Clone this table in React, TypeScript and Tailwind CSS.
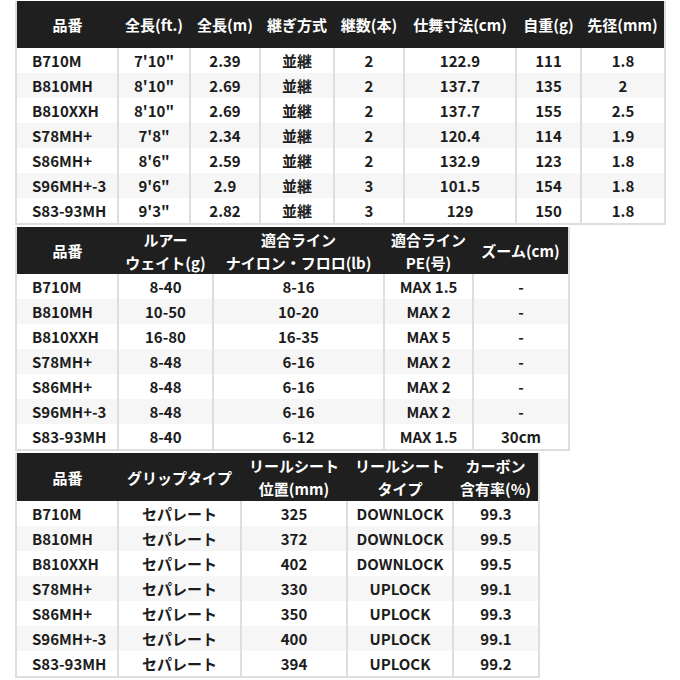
const font = { fontFamily: '"Noto Sans CJK JP", "Noto Sans", sans-serif' };

type Col = { label: string[]; w: number };

const rods = ["B710M", "B810MH", "B810XXH", "S78MH+", "S86MH+", "S96MH+-3", "S83-93MH"];

const t1Cols: Col[] = [
  { label: ["品番"], w: 102 },
  { label: ["全長(ft.)"], w: 72 },
  { label: ["全長(m)"], w: 70 },
  { label: ["継ぎ方式"], w: 74 },
  { label: ["継数(本)"], w: 70 },
  { label: ["仕舞寸法(cm)"], w: 112 },
  { label: ["自重(g)"], w: 65 },
  { label: ["先径(mm)"], w: 84 },
];
const t1Rows = [
  ["7'10\"", "2.39", "並継", "2", "122.9", "111", "1.8"],
  ["8'10\"", "2.69", "並継", "2", "137.7", "135", "2"],
  ["8'10\"", "2.69", "並継", "2", "137.7", "155", "2.5"],
  ["7'8\"", "2.34", "並継", "2", "120.4", "114", "1.9"],
  ["8'6\"", "2.59", "並継", "2", "132.9", "123", "1.8"],
  ["9'6\"", "2.9", "並継", "3", "101.5", "154", "1.8"],
  ["9'3\"", "2.82", "並継", "3", "129", "150", "1.8"],
];

const t2Cols: Col[] = [
  { label: ["品番"], w: 102 },
  { label: ["ルアー", "ウェイト(g)"], w: 95 },
  { label: ["適合ライン", "ナイロン・フロロ(lb)"], w: 171 },
  { label: ["適合ライン", "PE(号)"], w: 89 },
  { label: ["ズーム(cm)"], w: 96 },
];
const t2Rows = [
  ["8-40", "8-16", "MAX 1.5", "-"],
  ["10-50", "10-20", "MAX 2", "-"],
  ["16-80", "16-35", "MAX 5", "-"],
  ["8-48", "6-16", "MAX 2", "-"],
  ["8-48", "6-16", "MAX 2", "-"],
  ["8-48", "6-16", "MAX 2", "-"],
  ["8-40", "6-12", "MAX 1.5", "30cm"],
];

const t3Cols: Col[] = [
  { label: ["品番"], w: 102 },
  { label: ["グリップタイプ"], w: 123 },
  { label: ["リールシート", "位置(mm)"], w: 106 },
  { label: ["リールシート", "タイプ"], w: 106 },
  { label: ["カーボン", "含有率(%)"], w: 86 },
];
const t3Rows = [
  ["セパレート", "325", "DOWNLOCK", "99.3"],
  ["セパレート", "372", "DOWNLOCK", "99.5"],
  ["セパレート", "402", "DOWNLOCK", "99.5"],
  ["セパレート", "330", "UPLOCK", "99.1"],
  ["セパレート", "350", "UPLOCK", "99.3"],
  ["セパレート", "400", "UPLOCK", "99.1"],
  ["セパレート", "394", "UPLOCK", "99.2"],
];

function SpecTable({ cols, rows, headH }: { cols: Col[]; rows: string[][]; headH: number }) {
  return (
    <table className="table-fixed border-collapse border-x-2 border-b-2 border-[#dedede] text-[15px] font-bold">
      <colgroup>
        {cols.map((c, i) => (
          <col key={i} style={{ width: c.w }} />
        ))}
      </colgroup>
      <thead>
        <tr className="bg-[#1f1f1f] text-white" style={{ height: headH }}>
          {cols.map((c, i) => (
            <th key={i} className="p-0 text-center leading-[23px] font-bold">
              {c.label.map((l, j) => (
                <div key={j} className="whitespace-nowrap">
                  {l}
                </div>
              ))}
            </th>
          ))}
        </tr>
      </thead>
      <tbody className="text-[#1c1c1c]">
        {rows.map((r, ri) => (
          <tr key={ri} className={`h-[25px] ${ri % 2 === 1 ? "bg-[#f6f6f6]" : "bg-white"}`}>
            <td className="border-r-2 border-[#dedede] p-0 pl-[15px] leading-[25px] whitespace-nowrap">
              {rods[ri]}
            </td>
            {r.map((v, vi) => (
              <td
                key={vi}
                className="border-r-2 border-[#dedede] p-0 text-center leading-[25px] whitespace-nowrap"
              >
                {v}
              </td>
            ))}
          </tr>
        ))}
      </tbody>
    </table>
  );
}

export default function App() {
  return (
    <div className="h-[680px] w-[680px] bg-white pl-[15px] pt-px" style={font}>
      <div className="flex flex-col items-start gap-[2px]">
        <SpecTable cols={t1Cols} rows={t1Rows} headH={47} />
        <SpecTable cols={t2Cols} rows={t2Rows} headH={47} />
        <SpecTable cols={t3Cols} rows={t3Rows} headH={48} />
      </div>
    </div>
  );
}
